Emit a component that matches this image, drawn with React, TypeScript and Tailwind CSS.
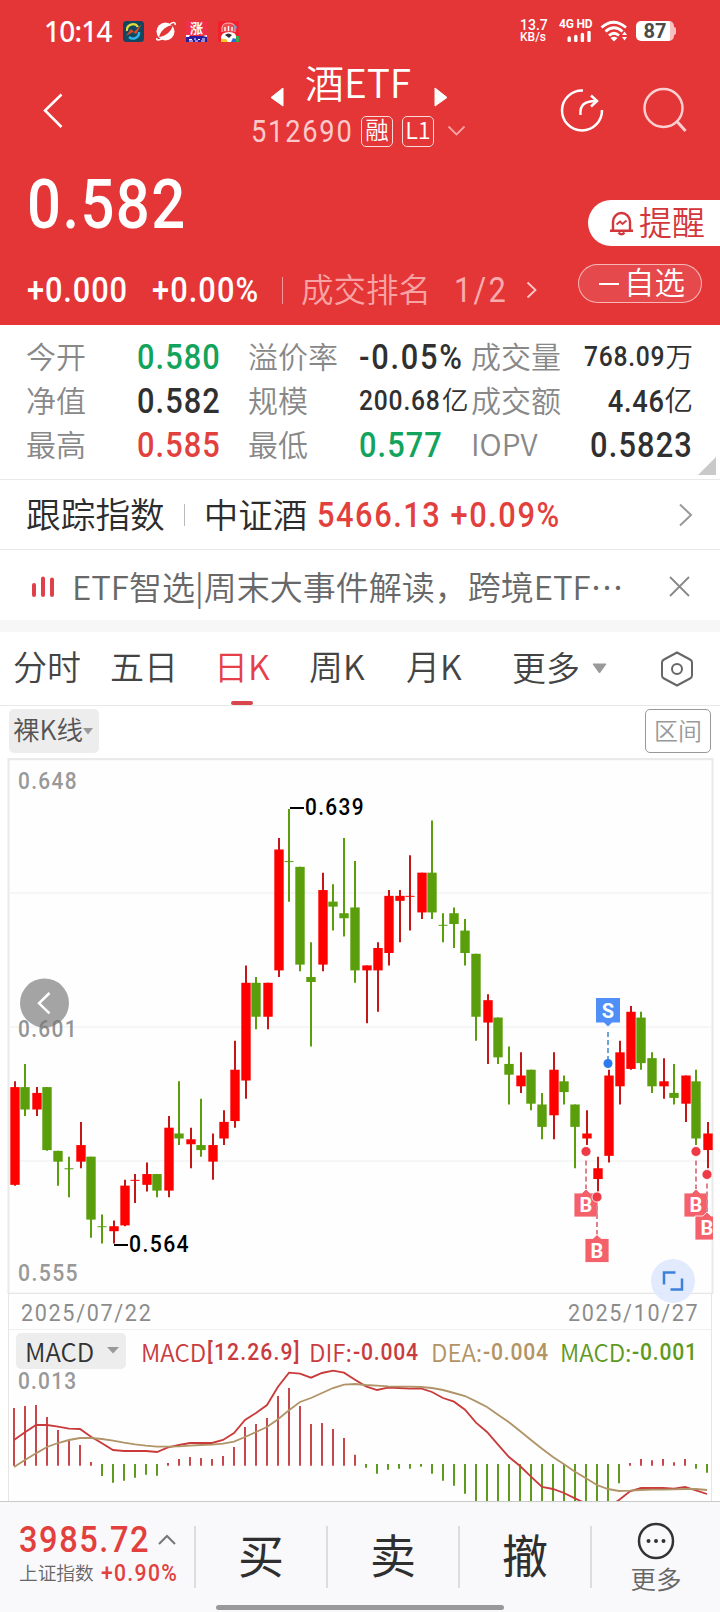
import type { ReactNode } from "react";
import clsx from "clsx";

// Narrow figures: glyphs are squeezed horizontally and tracked out again
const Num = ({ className, children }: { className?: string; children: ReactNode }) => (
  <span
    className={clsx(
      "inline-block shrink-0 scale-x-[0.88] whitespace-nowrap font-medium leading-none [font-family:Roboto,sans-serif]",
      className
    )}
  >
    {children}
  </span>
);

/* ---------- Data ---------- */

// [high, body top, body bottom, low, up = 1 / down = 0], prices in 0.001
const candles: number[][] = [
  [592, 591, 574, 574, 1], [595, 591, 587, 586, 0], [591, 590, 587, 586, 1], [591, 591, 580, 580, 0],
  [580, 580, 578, 574, 0], [579, 577, 577, 572, 0], [585, 581, 578, 577, 1], [579, 579, 568, 565, 0],
  [569, 567, 567, 564, 0], [568, 567, 566, 564, 1], [575, 574, 567, 567, 1], [576, 575, 575, 571, 1],
  [578, 576, 574, 573, 1], [576, 576, 573, 572, 0], [586, 584, 573, 572, 1], [592, 583, 582, 581, 0],
  [584, 582, 581, 577, 1], [589, 581, 580, 579, 0], [583, 581, 578, 575, 1], [587, 585, 582, 581, 1],
  [599, 594, 585, 584, 1], [612, 609, 592, 589, 1], [610, 609, 603, 601, 0], [609, 609, 603, 601, 1],
  [634, 632, 611, 610, 1], [639, 630, 630, 623, 0], [629, 629, 612, 611, 0], [616, 610, 609, 598, 0],
  [628, 625, 612, 611, 1], [626, 623, 622, 618, 0], [634, 621, 620, 617, 0], [630, 622, 611, 609, 0],
  [612, 612, 611, 602, 1], [616, 615, 611, 604, 1], [625, 624, 614, 612, 1], [625, 624, 623, 616, 1],
  [631, 624, 624, 618, 1], [628, 628, 621, 620, 1], [637, 628, 621, 620, 0], [621, 619, 619, 616, 0],
  [622, 621, 619, 615, 0], [620, 618, 614, 612, 0], [614, 614, 603, 599, 0], [607, 606, 602, 595, 1],
  [603, 603, 596, 595, 0], [598, 595, 593, 588, 0], [597, 593, 591, 590, 1], [594, 594, 588, 587, 0],
  [590, 588, 584, 582, 0], [597, 594, 586, 582, 1], [593, 592, 590, 588, 0], [588, 588, 584, 577, 0],
  [587, 583, 582, 581, 1], [579, 577, 575, 573, 1], [594, 593, 579, 578, 1], [599, 597, 591, 588, 1],
  [605, 604, 594, 594, 1], [604, 603, 595, 594, 0], [597, 596, 591, 590, 0], [596, 592, 591, 589, 1],
  [595, 590, 589, 588, 0], [593, 593, 588, 585, 1], [594, 592, 582, 581, 0], [585, 583, 580, 577, 1],
];

// MACD panel is drawn in a 2160 wide view box, zero line at 525
const macdBars = [
  354, 348, 345, 381, 420, 452, 465, 516, 558, 578, 572, 563, 554, 557, 519, 507, 501, 504, 507, 498, 471, 411,
  402, 384, 318, 294, 348, 402, 399, 417, 444, 494, 533, 551, 539, 536, 536, 530, 551, 572, 587, 611, 640, 640,
  640, 640, 640, 640, 640, 640, 640, 640, 640, 640, 640, 580, 519, 507, 511, 507, 517, 507, 536, 548,
];
const dif = [
  450, 427, 405, 405, 410, 416, 417, 440, 460, 480, 483, 483, 483, 486, 472, 465, 459, 459, 459, 450, 429, 390,
  369, 345, 290, 248, 251, 263, 249, 242, 248, 269, 289, 300, 293, 294, 296, 295, 306, 324, 335, 359, 398, 426,
  464, 501, 528, 560, 591, 597, 609, 625, 641, 660, 652, 630, 604, 594, 594, 594, 596, 591, 601, 612,
];
const dea = [
  531, 510, 490, 471, 459, 450, 444, 444, 447, 452, 458, 463, 467, 470, 470, 469, 467, 465, 464, 461, 455, 441,
  426, 411, 388, 361, 336, 324, 309, 294, 284, 282, 285, 287, 289, 290, 290, 291, 294, 300, 309, 318, 334, 351,
  374, 397, 423, 450, 476, 501, 523, 545, 565, 585, 597, 603, 602, 600, 599, 599, 598, 597, 597, 600,
];

const toPoints = (values: number[]) => values.map((v, i) => `${42 + i * 33},${v}`).join(" ");
const priceY = (p: number) => 485.6 + (564 - p) * 5.796;

/* ---------- Header ---------- */

const StatusBar = () => (
  <div className="flex h-[62px] items-center pl-11 pr-11 text-white">
    <span className="w-[79px] text-[28px] font-medium leading-none tracking-[-0.8px] [font-family:'Noto_Sans',sans-serif]">
      10:14
    </span>
    <div className="flex gap-[10.5px]">
      <svg width="21" height="21" viewBox="0 0 21 21">
        <rect width="21" height="21" rx="3.5" fill="#12475f" />
        <path d="M4 10a6 6 0 0 1 11-4" fill="none" stroke="#e5dc3c" strokeWidth="2.2" />
        <path d="M16 11a6 6 0 0 1-10 5" fill="none" stroke="#2fb4e8" strokeWidth="2.4" />
        <path d="M3 15 8 8l3 3 8-8-6 10-3-2z" fill="#e04a28" />
      </svg>
      <svg width="21" height="21" viewBox="0 0 21 21">
        <circle cx="10.5" cy="10.5" r="9" fill="#fff" />
        <path d="M4 16C6 9 11 5 18 4c-2 7-7 11-14 12Z" fill="#e43537" />
        <path d="M2 17C1 20 4 19 7 18M15 3c3-2 6-2 5 1" fill="none" stroke="#fff" strokeWidth="1.5" />
      </svg>
      <div className="flex h-[21px] w-[21px] flex-col items-center bg-[#f03048]">
        <span className="h-[14px] text-[13px] font-bold leading-[13px] [font-family:'Noto_Sans_CJK_SC',sans-serif]">涨</span>
        <svg width="21" height="7" viewBox="0 0 21 7">
          <path d="M0 1h21v6H0z" fill="#2c1c9c" />
          <path d="M0 0h4l-1 2H0zM17 1l4-1v2z" fill="#fff" />
          <path d="M3 4.5h3M8 4h2M12 4.5h2M16 4h3M3 6h4M9 6h3M15 6h4" stroke="#fff" />
        </svg>
      </div>
      <svg width="21" height="21" viewBox="0 0 21 21">
        <rect width="21" height="21" fill="#f0202c" />
        <path d="M4 11V7q0-5 6.500-5T17 7v4" fill="#ee4a50" stroke="#fbb" strokeWidth="1" />
        <path d="M7 10V6M10.500 10V5M14 10V6" stroke="#fff" strokeWidth="1.4" />
        <path d="m16 3 3 3-2 5z" fill="#6b9ed0" />
        <path d="M3 17q0-6 8-6t7 6l-2 4H5z" fill="#fff" />
        <path d="M7 14q3-3 7 0l-3 3z" fill="#333" />
        <path d="M3 18h5l2 3H3z" fill="#f4c820" />
        <path d="m13 21 2-4 3 1v3z" fill="#2868d8" />
        <path d="M18 15h3v6h-3z" fill="#3aa850" />
      </svg>
    </div>
    <div className="ml-auto flex items-center [font-family:Roboto,sans-serif]">
      <div className="w-[39px] font-medium">
        <div className="text-[14px] leading-[12px]">13.7</div>
        <div className="text-[12px] leading-[12px]">KB/s</div>
      </div>
      <div className="flex w-[41px] flex-col gap-[2px]">
        <div className="whitespace-nowrap text-[12px] font-bold leading-[9px] tracking-[-0.2px]">4G HD</div>
        <svg className="ml-2" width="24" height="11" viewBox="0 0 24 11">
          <path d="M2.200 9.500V7M8.800 9.500V5.500M15.400 9.500V3.500M22 9.500V1.500" stroke="#fff" strokeWidth="3.4" strokeLinecap="round" />
        </svg>
      </div>
      <svg className="mr-2" width="28" height="22" viewBox="0 0 28 22">
        <g fill="none" stroke="#fff" strokeWidth="2.8">
          <path d="M1.500 7.500q12-10.500 24.500 0" />
          <path d="M5.500 11.500q8.500-7.500 17 0" />
          <path d="M9 15.500q5-4.500 10 0" />
        </g>
        <path d="m10.500 18 3.500 3.500 3.500-3.500q-3.500-2.500-7 0Z" fill="#fff" />
        <path d="m22 15 2.500-3.500L27 15zM22 17l2.500 3.500L27 17z" fill="#fff" />
      </svg>
      <div className="flex items-center">
        <div className="flex h-5 w-[38px] items-center justify-center rounded-[5px] border-r-4 border-[#f7c0c2] bg-white">
          <span className="pl-1 text-[20px] font-bold leading-none text-[#4a4a4a]">87</span>
        </div>
        <div className="h-2 w-[2px] rounded-r bg-[#f7c0c2]" />
      </div>
    </div>
  </div>
);

const Header = () => (
  <header className="h-[325px] bg-[#e43537] text-white">
    <StatusBar />

    {/* Title row */}
    <div className="flex h-[92px] items-start pl-[42px] pr-[32px]">
      <svg className="mt-[30px]" width="22" height="38" viewBox="0 0 22 38">
        <path d="M19.500 2.500 3 18.500l16.500 16.500" fill="none" stroke="#fff" strokeWidth="2.5" />
      </svg>
      <div className="ml-[187px] flex w-[216px] flex-col items-center">
        <div className="flex items-center">
          <svg className="mt-[25px]" width="14" height="20" viewBox="0 0 14 20">
            <path d="M13 1v18L1 10.500z" fill="#fff" stroke="#fff" strokeLinejoin="round" />
          </svg>
          <h1 className="-mt-[4px] mb-[4px] ml-[21px] mr-[23px] whitespace-nowrap text-[39px] leading-[44px]">酒ETF</h1>
          <svg className="mt-[25px]" width="14" height="20" viewBox="0 0 14 20">
            <path d="M1 1v18l12-8.500z" fill="#fff" stroke="#fff" strokeLinejoin="round" />
          </svg>
        </div>
        <div className="mt-[8px] flex h-8 w-[216px] items-center">
          <Num className="w-[110px] origin-left text-[31px] !font-normal tracking-[2px] text-[#fcc9ca]">512690</Num>
          <span className="flex h-[31px] w-8 shrink-0 items-center justify-center rounded-[5px] border border-[#fbdada] pb-[2px] text-[23.5px] leading-none">
            融
          </span>
          <span className="ml-[9px] flex h-[31px] w-8 shrink-0 items-center justify-center rounded-[5px] border border-[#fbdada] pb-[2px] text-[23.5px] leading-none">
            L1
          </span>
          <svg className="ml-[13px] shrink-0" width="19" height="12" viewBox="0 0 19 12">
            <path d="m1.500 1.500 8 8 8-8" fill="none" stroke="#f4a3a4" strokeWidth="1.8" />
          </svg>
        </div>
      </div>
      <div className="ml-auto mt-[25px] flex gap-[38px]">
        <svg width="44" height="46" viewBox="0 0 44 46" fill="none" stroke="#fff" strokeWidth="2.5">
          <path d="M23 3.500A20 20 0 1 0 42 23" />
          <path d="M20.500 28c-1-10 4-14 15.500-14M31 8.500l6 5.500-6 5.500" />
        </svg>
        <svg width="46" height="46" viewBox="0 0 46 46" fill="none" stroke="#fccfd0" strokeWidth="2.5">
          <circle cx="21.5" cy="21" r="19" />
          <path d="m35.500 35 8 9" strokeWidth="3" />
        </svg>
      </div>
    </div>

    {/* Price and actions */}
    <div className="flex h-[171px] justify-between">
      <div className="pl-[27px]">
        <Num className="mt-[17px] !block w-[180px] origin-left text-[68px] leading-[68px] tracking-[1.6px]">0.582</Num>
        <div className="mt-[31px] flex h-[40px] items-center">
          <Num className="w-[125px] origin-left text-[35px] tracking-[1px]">+0.000</Num>
          <Num className="w-[130px] origin-left text-[35px] tracking-[1.2px]">+0.00%</Num>
          <span className="h-[27px] w-px bg-white/50" />
          <span className="-mt-[4px] ml-[18px] w-[153px] whitespace-nowrap text-[32.5px] leading-none text-[#f7a3a4]">
            成交排名
          </span>
          <Num className="w-[72px] origin-left text-[35px] !font-normal tracking-[2.5px] text-[#f9acad]">1/2</Num>
          <svg width="12" height="18" viewBox="0 0 12 18">
            <path d="m1.500 1.500 8 7.500-8 7.500" fill="none" stroke="#fccaca" strokeWidth="1.8" />
          </svg>
        </div>
      </div>
      <div className="flex flex-col items-end pt-[46px]">
        <button className="flex h-[46px] w-[132px] items-center rounded-l-full bg-white pl-[21px] text-[#d3363b]">
          <svg width="25" height="27" viewBox="0 0 25 27" fill="none" stroke="#d3363b" strokeWidth="2.4">
            <path d="M4 20.500V12a8.500 9 0 0 1 17 0v8.500M1 20.800h23" />
            <path d="M9.500 22.500q3 3.500 6 0" />
            <path d="m7.500 14.500 3.500-3 2.500 2.500 4-3.500" strokeWidth="1.8" />
          </svg>
          <span className="-mt-[3px] ml-[5px] text-[33px] leading-none">提醒</span>
        </button>
        <button className="mr-[18px] mt-[18px] flex h-[39px] w-[124px] items-center rounded-full border border-white/60 bg-white/10 pl-5">
          <span className="h-[2px] w-5 bg-white" />
          <span className="-mt-[4px] ml-[5px] text-[30.5px] leading-none">自选</span>
        </button>
      </div>
    </div>
  </header>
);

/* ---------- Quote table ---------- */

const Label = ({ children }: { children: ReactNode }) => (
  <span className="-mt-[4px] whitespace-nowrap text-[30px] leading-none text-[#888]">{children}</span>
);

const QuoteTable = () => (
  <section className="relative h-[155px] border-b border-[#e8e8e8] pl-[26px] pr-[27px] pt-[10px]">
    <div className="grid auto-rows-[44px] grid-cols-[111px_111px_111px_112px_222px] items-center text-[#303030]">
      <Label>今开</Label>
      <Num className="origin-left text-[35px] tracking-[1.2px] text-[#12a35c]">0.580</Num>
      <Label>溢价率</Label>
      <Num className="origin-left text-[35px] tracking-[2px]">-0.05%</Num>
      <div className="flex items-center justify-between">
        <Label>成交量</Label>
        <div className="flex items-center">
          <Num className="origin-right text-[28px] tracking-[0.8px]">768.09</Num>
          <span className="-mt-[3px] text-[27.5px] leading-none">万</span>
        </div>
      </div>
      <Label>净值</Label>
      <Num className="origin-left text-[35px] tracking-[1.2px]">0.582</Num>
      <Label>规模</Label>
      <div className="flex items-center">
        <Num className="w-[83px] origin-left text-[28px] tracking-[0.9px]">200.68</Num>
        <span className="-mt-[3px] text-[26.5px] leading-none">亿</span>
      </div>
      <div className="flex items-center justify-between">
        <Label>成交额</Label>
        <div className="flex items-center">
          <Num className="origin-right text-[31px] tracking-[0.8px]">4.46</Num>
          <span className="-mt-[3px] text-[28.5px] leading-none">亿</span>
        </div>
      </div>
      <Label>最高</Label>
      <Num className="origin-left text-[35px] tracking-[1.2px] text-[#e2403d]">0.585</Num>
      <Label>最低</Label>
      <Num className="origin-left text-[35px] tracking-[1.2px] text-[#12a35c]">0.577</Num>
      <div className="flex items-center justify-between">
        <Label>IOPV</Label>
        <Num className="origin-right text-[35px] tracking-[1.3px]">0.5823</Num>
      </div>
    </div>
    <svg className="absolute bottom-1 right-1" width="18" height="18" viewBox="0 0 18 18">
      <path d="M18 0v18H0z" fill="#c9c9c9" />
    </svg>
  </section>
);

const IndexRow = () => (
  <section className="flex h-[70px] items-center border-b border-[#e8e8e8] pl-[26px] pr-[27px] text-[#2c2c2c]">
    <span className="-mt-[2px] text-[34.7px] leading-none">跟踪指数</span>
    <span className="ml-[19px] h-[22px] w-px bg-[#bbb]" />
    <span className="-mt-[2px] ml-[19px] text-[34.5px] leading-none">中证酒</span>
    <Num className="ml-[10px] mt-px origin-left text-[35px] tracking-[1.75px] text-[#e2403d]">5466.13 +0.09%</Num>
    <svg className="ml-auto" width="15" height="24" viewBox="0 0 15 24">
      <path d="m2 1.500 11 10.500L2 22.500" fill="none" stroke="#999" strokeWidth="2" />
    </svg>
  </section>
);

const NewsRow = () => (
  <section className="flex h-[70px] items-center pl-8 pr-[30px] pt-[3px]">
    <svg width="24" height="22" viewBox="0 0 24 22">
      <path d="M2 9v10M11 2.500V19M20 3.500V19" stroke="#e0404a" strokeWidth="4" strokeLinecap="round" />
    </svg>
    <span lang="zh-CN" className="ml-4 whitespace-nowrap text-[33px] leading-none text-[#686868]">
      ETF智选|周末大事件解读，跨境ETF…
    </span>
    <svg className="ml-auto" width="21" height="21" viewBox="0 0 21 21">
      <path d="m1 1 19 19M20 1 1 20" stroke="#888" strokeWidth="1.8" />
    </svg>
  </section>
);

/* ---------- Tabs ---------- */

const tabs = [
  { name: "分时", width: "w-[97px]" },
  { name: "五日", width: "w-[104px]" },
  { name: "日K", width: "w-[95px]", active: true },
  { name: "周K", width: "w-[97px]" },
  { name: "月K", width: "w-[106px]" },
];

const Tabs = () => (
  <nav className="flex h-[74px] items-center border-b border-[#e8e8e8] pl-[13px] text-[34px] leading-none text-[#444]">
    {tabs.map((tab) => (
      <div key={tab.name} className={clsx("h-full shrink-0", tab.width)}>
        <div className={clsx("flex h-full w-max flex-col items-center", tab.active && "text-[#e5404a]")}>
          <span className="pt-[17px]">{tab.name}</span>
          {tab.active && <span className="mt-auto h-1 w-[22px] rounded-full bg-[#d8464c]" />}
        </div>
      </div>
    ))}
    <span className="-mt-[4px] w-[80px]">更多</span>
    <svg width="15" height="11" viewBox="0 0 15 11">
      <path d="M1 1h13L7.500 10z" fill="#999" stroke="#999" strokeLinejoin="round" />
    </svg>
    <svg className="ml-[53px]" width="34" height="36" viewBox="0 0 34 36" fill="none" stroke="#666" strokeWidth="2">
      <path d="M17 1.500 30 8.500q2 1 2 3v13q0 2-2 3L17 34.500 4 27.500q-2-1-2-3v-13q0-2 2-3z" />
      <circle cx="17" cy="18" r="5" />
    </svg>
  </nav>
);

const ChartToolbar = () => (
  <div className="flex h-[52px] items-start justify-between px-[9px] pt-[3px]">
    <button className="flex h-11 w-[90px] items-center rounded-[5px] bg-[#ededed] pl-1 text-[#555]">
      <span className="-mt-[3px] whitespace-nowrap text-[26.5px] leading-none">裸K线</span>
      <svg width="10" height="7" viewBox="0 0 10 7">
        <path d="M0 0h10L5 6.500z" fill="#999" />
      </svg>
    </button>
    <button className="flex h-11 w-[66px] items-center justify-center rounded-[5px] border border-[#999] pb-[3px] text-[24px] leading-none text-[#999]">
      区间
    </button>
  </div>
);

/* ---------- Candlestick chart ---------- */

// Trade marker: tag, dashed lead and a dot on the candle
const BuyMark = ({ x, dot, top }: { x: number; dot: number; top: number }) => (
  <g>
    <path d={`M${x} ${dot + 9}V${top - 4}`} stroke="#e0808a" strokeWidth="2" strokeDasharray="5 3" />
    <path d={`M${x - 12} ${top}h8l4-4 4 4h8v24h-24z`} fill="#f4616b" stroke="#fff" strokeWidth="0.8" />
    <text x={x} y={top + 19} textAnchor="middle" fontSize="20" fontWeight="700" fill="#fff">B</text>
    <circle cx={x} cy={dot} r="5" fill="#ee3a45" stroke="#fff" strokeWidth="0.8" />
  </g>
);

const CandleChart = () => (
  <div className="relative h-[536px]">
    <svg className="block" width="720" height="536" viewBox="0 0 720 536" fontFamily="Roboto, sans-serif">
      <rect x="8" y="0" width="705" height="536" fill="#fefefe" />
      <path d="M8 1h705" stroke="#eaeaea" strokeWidth="2.5" />
      <path d="M8.500 0v536M712.500 0v536" stroke="#eaeaea" strokeWidth="2" />
      <path d="M9 135h703M9 269h703M9 403h703" stroke="#f3f3f3" strokeWidth="1.5" />
      <path d="M8 535.500h705" stroke="#e6e6e6" strokeWidth="1.5" />
      <circle cx="44.5" cy="245" r="24.5" fill="#a4a4a4" />
      <path d="M49.500 235 39 245.300l10.500 10" fill="none" stroke="#fff" strokeWidth="2.5" />

      {candles.map(([high, top, bottom, low, up], i) => {
        const x = 14 + i * 11 + (up && top !== bottom ? 1 : 0);
        const color = up ? "#ff0000" : "#5a9e0b";
        return (
          <g key={i}>
            <path d={`M${x} ${priceY(high)}V${priceY(low)}`} stroke={up ? "#c41818" : color} strokeWidth="2" />
            {top === bottom ? (
              <path d={`M${x - 4.5} ${priceY(top) + 0.5}h9`} stroke={color} strokeWidth="1" />
            ) : (
              <rect x={x - 4.7} y={priceY(top)} width="9.4" height={priceY(bottom) - priceY(top) - 0.8} fill={color} />
            )}
          </g>
        );
      })}

      <g fontSize="23" fontWeight="500" letterSpacing="1.5">
        <g fill="#999">
          <text x="18" y="30.5" textLength="60" lengthAdjust="spacingAndGlyphs">0.648</text>
          <text x="18" y="279" textLength="60" lengthAdjust="spacingAndGlyphs" fill="#777" fillOpacity="0.8">0.601</text>
          <text x="18" y="523" textLength="61" lengthAdjust="spacingAndGlyphs">0.555</text>
        </g>
        <path d="M290 50h14M114 487h14" stroke="#000" strokeWidth="2" />
        <text x="305" y="57" textLength="60" lengthAdjust="spacingAndGlyphs" fill="#000">0.639</text>
        <text x="129" y="494" textLength="61" lengthAdjust="spacingAndGlyphs" fill="#000">0.564</text>
      </g>

      <path d="M608 274v29" stroke="#6ea3d8" strokeWidth="2" strokeDasharray="5 3" />
      <path d="M596 240h24v24.500h-8l-4 4-4-4h-8z" fill="#4f8ff7" />
      <text x="608" y="259.5" textAnchor="middle" fontSize="20" fontWeight="700" fill="#fff">S</text>
      <circle cx="608" cy="305.5" r="4.5" fill="#2b7af0" />
      <BuyMark x={586} dot={393.5} top={435} />
      <BuyMark x={597} dot={439} top={480.5} />
      <BuyMark x={696} dot={393.5} top={435} />
      <svg width="713" height="536">
        <BuyMark x={707} dot={416.5} top={458} />
      </svg>
    </svg>
    <button className="absolute left-[651px] top-[501px] flex h-11 w-11 items-center justify-center rounded-full bg-[#dfe9fd]/90">
      <svg width="22" height="20" viewBox="0 0 22 20" fill="none" stroke="#3d80dc" strokeWidth="2.5">
        <path d="M13.500 1.500H2v12M8.500 18.500H20V7.500" />
      </svg>
    </button>
  </div>
);

/* ---------- MACD panel ---------- */

const MacdPanel = () => (
  <div className="mx-2 h-[207px] border-x border-[#e6e6e6] bg-[#fefefe]">
    <div className="flex h-[36px] items-center justify-between border-b border-[#f0f0f0] pl-[12px] pr-[12px] pt-[3px]">
      <Num className="origin-left text-[24.5px] !font-normal tracking-[1.9px] text-[#8c8c8c]">2025/07/22</Num>
      <Num className="origin-right text-[24.5px] !font-normal tracking-[1.9px] text-[#8c8c8c]">2025/10/27</Num>
    </div>
    <div className="flex h-[38px] items-center whitespace-nowrap text-[24px] leading-none">
      <button className="ml-[7px] mt-[3px] flex h-9 w-[110px] items-center rounded-[5px] bg-[#ededed] pl-[9px] text-left text-[#333]">
        <span className="w-[82px] pt-px text-[25.5px]">MACD</span>
        <svg width="12" height="7" viewBox="0 0 12 7">
          <path d="M0 0h12L6 6.500z" fill="#999" />
        </svg>
      </button>
      <div className="ml-[15px] mt-[6px] flex items-center text-[#c93b3f]">
        <span className="w-[66px]">MACD</span>
        <Num className="w-[102px] origin-left tracking-[1.3px]">[12.26.9]</Num>
        <span className="w-[44px]">DIF:</span>
        <Num className="w-[78px] origin-left tracking-[0.9px]">-0.004</Num>
      </div>
      <div className="mt-[6px] flex items-center text-[#b39364]">
        <span className="w-[52px]">DEA:</span>
        <Num className="w-[77px] origin-left tracking-[0.9px]">-0.004</Num>
      </div>
      <div className="mt-[6px] flex items-center text-[#5f9a1f]">
        <span className="w-[72px]">MACD:</span>
        <Num className="w-[70px] origin-left tracking-[0.9px]">-0.001</Num>
      </div>
    </div>
    <svg className="-ml-[9px] block" width="720" height="133" viewBox="0 234 2160 399">
      {macdBars.map((v, i) => (
        <path
          key={i}
          d={`M${42 + i * 33} ${v < 525 ? 527 : 522}V${v}`}
          stroke={v < 525 ? "#c8474c" : "#5f9a1f"}
          strokeWidth="6"
        />
      ))}
      <polyline points={toPoints(dif)} fill="none" stroke="#c93b3b" strokeWidth="5.5" />
      <polyline points={toPoints(dea)} fill="none" stroke="#b09468" strokeWidth="5.5" />
      <text
        x="54"
        y="297"
        fontSize="70"
        fontWeight="500"
        letterSpacing="4"
        textLength="178"
        lengthAdjust="spacingAndGlyphs"
        fill="#999"
        fontFamily="Roboto, sans-serif"
      >
        0.013
      </text>
    </svg>
  </div>
);

/* ---------- Bottom bar ---------- */

const BottomBar = () => (
  <footer className="flex h-[111px] flex-col border-t border-[#c8ccc8] bg-[#f9f9fc]">
    <div className="flex h-[103px] items-start text-[#2f2f2f]">
      <div className="h-full w-[194px] pl-[19px]">
        <div className="mt-[16px] flex h-[42px] items-center">
          <Num className="w-[139px] origin-left text-[37px] tracking-[1.8px] text-[#e2403d]">3985.72</Num>
          <svg width="18" height="11" viewBox="0 0 18 11">
            <path d="m1 10 8-8 8 8" fill="none" stroke="#777" strokeWidth="2" />
          </svg>
        </div>
        <div className="flex h-[26px] items-center whitespace-nowrap">
          <span className="-mt-[2px] w-[82px] text-[18.7px] leading-none text-[#666]">上证指数</span>
          <Num className="origin-left text-[24px] tracking-[1.5px] text-[#e2403d]">+0.90%</Num>
        </div>
      </div>
      {["买", "卖", "撤"].map((action) => (
        <button
          key={action}
          className="mt-6 flex h-[62px] w-[132px] items-center justify-center border-l-2 border-[#ddd] pb-[9px] text-[46px] font-normal leading-none"
        >
          {action}
        </button>
      ))}
      <div className="mt-6 h-[62px] flex-1 border-l-2 border-[#ddd]">
        <div className="-mt-[4px] flex flex-col items-center">
          <svg width="38" height="38" viewBox="0 0 38 38">
            <circle cx="19" cy="19" r="17" fill="none" stroke="#333" strokeWidth="2.5" />
            <path d="M11.500 19h.01M19 19h.01M26.500 19h.01" stroke="#333" strokeWidth="4" strokeLinecap="round" />
          </svg>
          <span className="mt-[5px] text-[25.5px] leading-none text-[#666]">更多</span>
        </div>
      </div>
    </div>
    <div className="mx-auto h-[5px] w-72 rounded-full bg-[#999]" />
  </footer>
);

export default function App() {
  return (
    <div className="h-[1612px] w-[720px] overflow-hidden bg-white font-[350] [font-family:'Noto_Sans_CJK_SC',sans-serif]">
      <Header />
      <QuoteTable />
      <IndexRow />
      <NewsRow />
      <div className="h-3 bg-[#f7f7f7]" />
      <Tabs />
      <ChartToolbar />
      <CandleChart />
      <MacdPanel />
      <BottomBar />
    </div>
  );
}
